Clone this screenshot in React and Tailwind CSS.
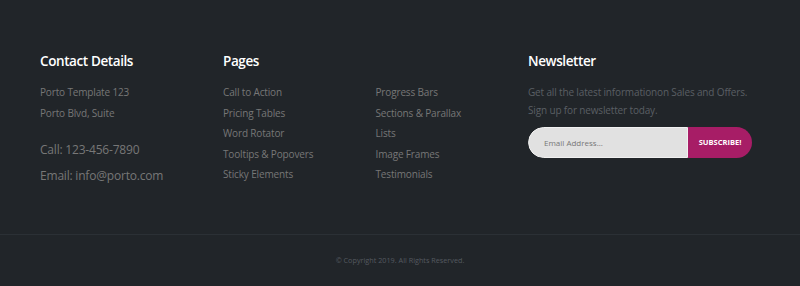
import React from 'react';

const pagesLeft = ['Call to Action', 'Pricing Tables', 'Word Rotator', 'Tooltips & Popovers', 'Sticky Elements'];
const pagesRight = ['Progress Bars', 'Sections & Parallax', 'Lists', 'Image Frames', 'Testimonials'];

const App = () => {
    return (
        <footer className="w-[800px] h-[286px] bg-[#212529] font-['Open_Sans',sans-serif] overflow-hidden">
            <div className="flex px-10 pt-[51px] h-[234px]">
                {/* Contact */}
                <div className="w-[183px]">
                    <h4 className="text-[13.5px] font-semibold text-white leading-[20px] tracking-[-0.4px]">Contact Details</h4>
                    <p className="mt-[11px] text-[10px] leading-[20.5px] tracking-[-0.15px] text-[#777]">Porto Template 123</p>
                    <p className="text-[10px] leading-[20.5px] tracking-[-0.15px] text-[#777]">Porto Blvd, Suite</p>
                    <p className="mt-[14px] text-[12px] leading-[26px] tracking-[-0.2px] text-[#777]">Call: 123-456-7890</p>
                    <p className="text-[12px] leading-[26px] tracking-[-0.2px] text-[#777]">Email: info@porto.com</p>
                </div>

                {/* Pages */}
                <div className="w-[305px]">
                    <h4 className="text-[13.5px] font-semibold text-white leading-[20px] tracking-[-0.4px]">Pages</h4>
                    <div className="mt-[11px] grid grid-cols-2">
                        <ul>
                            {pagesLeft.map(p => (
                                <li key={p} className="text-[10px] leading-[20.5px] tracking-[-0.15px] text-[#777]">{p}</li>
                            ))}
                        </ul>
                        <ul>
                            {pagesRight.map(p => (
                                <li key={p} className="text-[10px] leading-[20.5px] tracking-[-0.15px] text-[#777]">{p}</li>
                            ))}
                        </ul>
                    </div>
                </div>

                {/* Newsletter */}
                <div className="w-[224px]">
                    <h4 className="text-[13.5px] font-semibold text-white leading-[20px] tracking-[-0.4px]">Newsletter</h4>
                    <p className="mt-[12px] text-[10px] leading-[18px] tracking-[-0.15px] text-[#5a5f64]">
                        Get all the latest informationon Sales and Offers. Sign up for newsletter today.
                    </p>
                    <div className="mt-[8px] flex h-[31px] w-[224px] rounded-full overflow-hidden">
                        <div className="flex-1 bg-[#e1e1e1] flex items-center pl-[15px] text-[8px] text-[#777] border border-[#f0f0f0] rounded-l-full">
                            Email Address...
                        </div>
                        <button className="w-[64px] bg-[#a71d66] text-white text-[7.5px] font-bold uppercase">Subscribe!</button>
                    </div>
                </div>
            </div>

            <div className="border-t border-[#2b3035] h-[52px] flex items-center justify-center">
                <p className="text-[7.25px] text-[#555a60]">© Copyright 2019. All Rights Reserved.</p>
            </div>
        </footer>
    );
};

export default App;
